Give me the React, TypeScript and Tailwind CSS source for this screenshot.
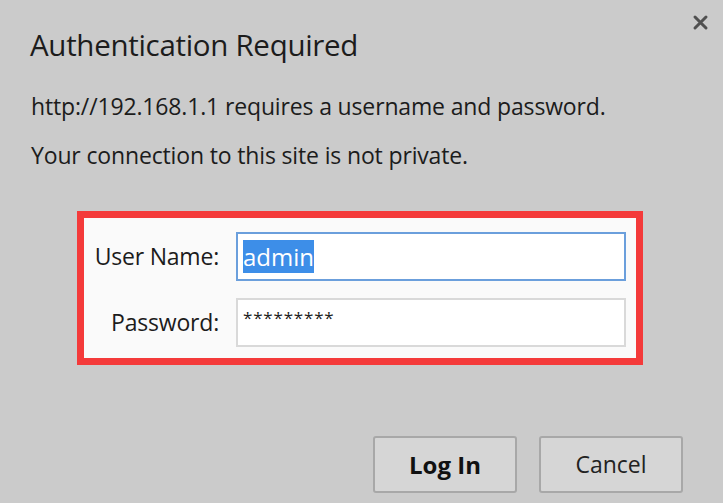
const font = { fontFamily: '"Open Sans", "Noto Sans", sans-serif' }

export default function App() {
  return (
    <div
      className="relative flex h-[503px] w-[723px] flex-col overflow-hidden bg-[#cbcbcb] text-[#1c1c1c]"
      style={font}
    >
      <button className="absolute right-[14px] top-[14px]" aria-label="Close">
        <svg width="17" height="17" viewBox="0 0 17 17">
          <path d="M3 3 L14 14 M14 3 L3 14" stroke="#505050" strokeWidth="3" strokeLinecap="round" />
        </svg>
      </button>

      <h1 className="ml-[30px] mt-[27px] text-[29.5px] leading-[36px] tracking-[-0.3px]">
        Authentication Required
      </h1>
      <p className="ml-[31px] mt-[28px] text-[23px] leading-[30px] tracking-[-0.15px]">
        http://192.168.1.1 requires a username and password.
      </p>
      <p className="ml-[31px] mt-[19px] text-[23px] leading-[30px] tracking-[-0.15px]">
        Your connection to this site is not private.
      </p>

      <div className="ml-[77px] mt-[41px] w-[566px] border-[7px] border-[#f43a3a] bg-[#fafafa]">
        <div className="grid grid-cols-[135px_1fr] items-center gap-x-[17px] gap-y-[17px] pt-[14px] pb-[11px] pr-[10px]">
          <label className="text-right text-[23px] tracking-[-0.2px]">User Name:</label>
          <div className="flex h-[49px] items-center border-2 border-[#6b9fdc] bg-white px-[5px]">
            <span className="bg-[#3d8ee8] text-[24px] leading-[33px] text-white">admin</span>
          </div>
          <label className="text-right text-[23px] tracking-[-0.2px]">Password:</label>
          <div className="flex h-[49px] items-start border-2 border-[#d9d9d9] bg-white px-[5px] pt-[8px] text-[17px] leading-[20px] tracking-[0.8px]">
            *********
          </div>
        </div>
      </div>

      <div className="mt-auto mb-[10px] flex justify-end gap-[22px] pr-[40px]">
        <button className="h-[57px] w-[144px] rounded-[3px] border-2 border-[#a8a8a8] bg-[#d6d6d6] text-[24px] font-bold text-[#111]">
          Log In
        </button>
        <button className="h-[57px] w-[144px] rounded-[3px] border-2 border-[#a8a8a8] bg-[#d6d6d6] text-[23px] text-[#222]">
          Cancel
        </button>
      </div>
    </div>
  )
}
